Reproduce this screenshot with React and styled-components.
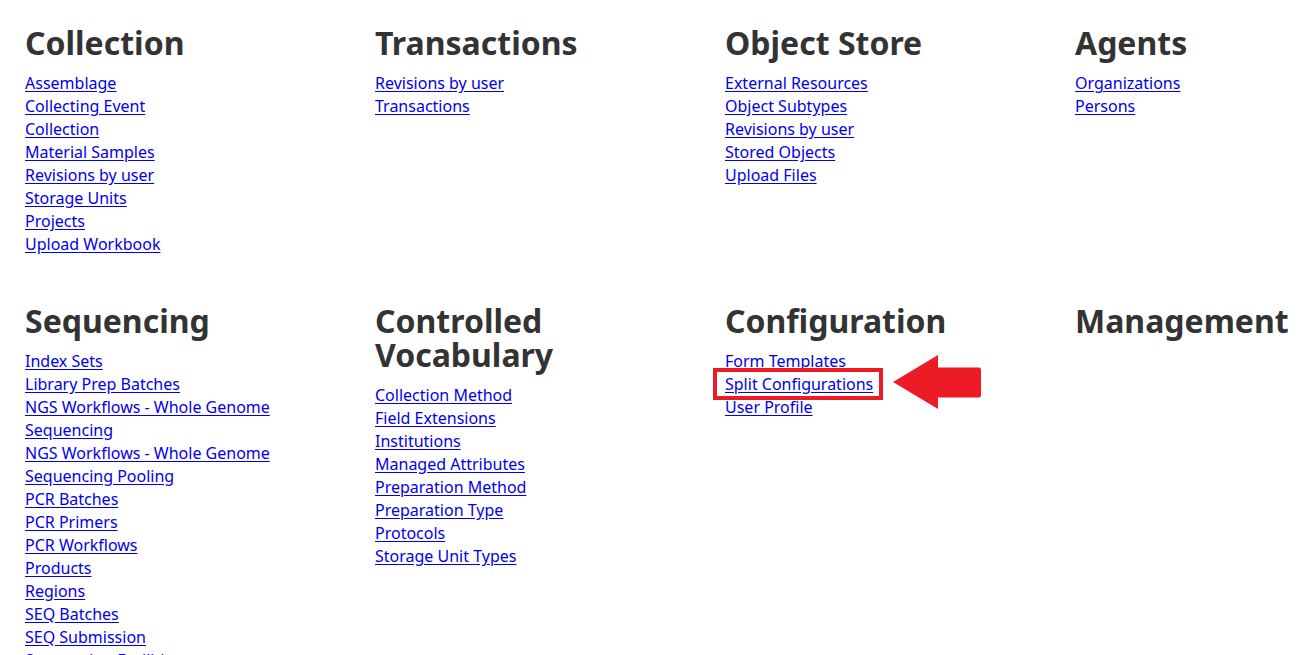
import React from "react";
import styled, { createGlobalStyle } from "styled-components";

const Global = createGlobalStyle`
  html, body { margin: 0; padding: 0; background: #fff; }
  body { font-family: "Noto Sans", "Open Sans", sans-serif; color: #333; }
`;

const Page = styled.main`
  padding: 26px 0 0 25px;
  display: grid;
  grid-template-columns: repeat(3, 350px) minmax(0, 1fr);
  row-gap: 47.5px;
`;

const Section = styled.section`
  display: flex;
  flex-direction: column;
  max-width: 320px;
`;

const Heading = styled.h2`
  margin: 0 0 12px;
  font-size: 32px;
  line-height: 34px;
  font-weight: 700;
  color: #333;
`;

const LinkList = styled.ul`
  list-style: none;
  margin: 0;
  padding: 0;
`;

const Item = styled.li`
  font-size: 16px;
  line-height: 23px;
`;

const Link = styled.a`
  position: relative;
  color: #0000ee;
  text-decoration: underline;
  text-underline-offset: 2px;
`;

const Highlight = styled.span`
  position: absolute;
  left: -12px;
  right: -10px;
  top: -4.5px;
  bottom: -5.5px;
  border: 4.5px solid #ed1c24;
  pointer-events: none;
`;

const Arrow = styled.svg`
  position: absolute;
  left: 168px;
  top: -17.5px;
  width: 89px;
  height: 54px;
  pointer-events: none;
`;

const sections = [
  { title: "Collection", links: ["Assemblage", "Collecting Event", "Collection", "Material Samples", "Revisions by user", "Storage Units", "Projects", "Upload Workbook"] },
  { title: "Transactions", links: ["Revisions by user", "Transactions"] },
  { title: "Object Store", links: ["External Resources", "Object Subtypes", "Revisions by user", "Stored Objects", "Upload Files"] },
  { title: "Agents", links: ["Organizations", "Persons"] },
  { title: "Sequencing", links: ["Index Sets", "Library Prep Batches", "NGS Workflows - Whole Genome Sequencing", "NGS Workflows - Whole Genome", "Sequencing Pooling", "PCR Batches", "PCR Primers", "PCR Workflows", "Products", "Regions", "SEQ Batches", "SEQ Submission", "Sequencing Facilities"] },
  { title: "Controlled Vocabulary", links: ["Collection Method", "Field Extensions", "Institutions", "Managed Attributes", "Preparation Method", "Preparation Type", "Protocols", "Storage Unit Types"] },
  { title: "Configuration", links: ["Form Templates", "Split Configurations", "User Profile"], highlight: "Split Configurations" },
  { title: "Management", links: [] },
];

function SectionBlock({ title, links, highlight }) {
  return (
    <Section>
      <Heading>{title}</Heading>
      <LinkList>
        {links.map((l, i) => (
          <Item key={i}>
            <Link href="#">
              {l}
              {highlight === l && (
                <>
                  <Highlight />
                  <Arrow viewBox="0 0 89 54">
                    <path
                      d="M0 27 L45 0 L45 12.5 L86 12.5 Q88 12.5 88 15 L88 40 Q88 42.5 86 42.5 L45 42.5 L45 54 Z"
                      fill="#ed1c24"
                    />
                  </Arrow>
                </>
              )}
            </Link>
          </Item>
        ))}
      </LinkList>
    </Section>
  );
}

export default function App() {
  return (
    <>
      <Global />
      <Page>
        {sections.map((s) => (
          <SectionBlock key={s.title} {...s} />
        ))}
      </Page>
    </>
  );
}
